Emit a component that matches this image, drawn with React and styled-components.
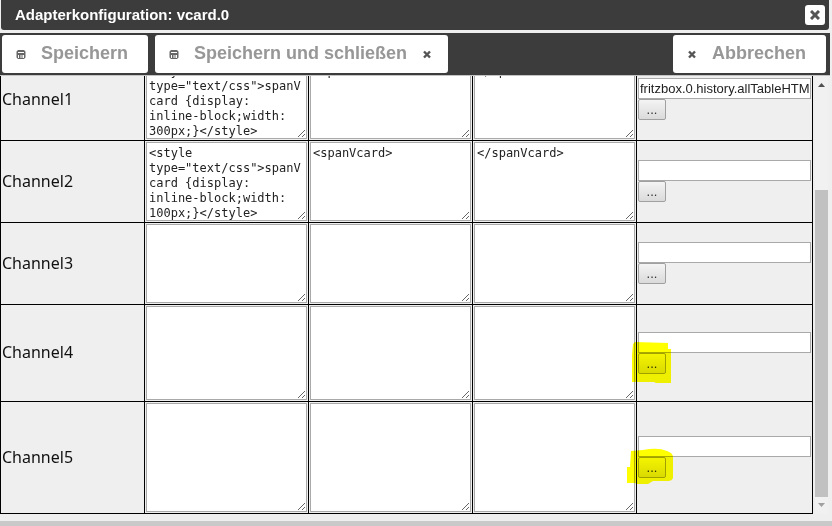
import React from "react";
import styled, { createGlobalStyle } from "styled-components";

const style = (width) =>
  `<style type="text/css">spanVcard {display: inline-block;width: ${width}px;}</style>`;

const channels = [
  {
    name: "Channel1",
    height: 79,
    fields: [style(300), "<spanVcard>", "</spanVcard>"],
    source: "fritzbox.0.history.allTableHTML",
  },
  {
    name: "Channel2",
    height: 79,
    fields: [style(100), "<spanVcard>", "</spanVcard>"],
    source: "",
  },
  { name: "Channel3", height: 79, fields: ["", "", ""], source: "" },
  {
    name: "Channel4",
    height: 94,
    fields: ["", "", ""],
    source: "",
    marker: "M5 2 L7 0 L40 1 L40 7 L43 7 L43 41 L28 41 L26 40 L4 40 L4 13 Z",
  },
  {
    name: "Channel5",
    height: 109,
    fields: ["", "", ""],
    source: "",
    marker:
      "M3 5 L15 4 Q30 1 39 5 Q45 7 45 11 L45 32 Q44 35 40 35 L25 35 L20 38 L9 38 L7 37 L-1 37 L-1 21 L2 21 Z",
  },
];

const DiskIcon = () => (
  <Icon viewBox="0 0 10 10" aria-hidden="true">
    <path
      fill="#666"
      fillRule="evenodd"
      d="M2 1h6l1.5 1.5v6L8 10H2L.5 8.500v-6zM2 3v1h6V3zM2 6v3h1V6zM4.500 6v3H5.500V6zM6.500 6v3H8V6z"
    />
  </Icon>
);

const CrossIcon = () => (
  <Icon viewBox="0 0 10 10" aria-hidden="true">
    <path d="M2 2.5L8 8.5M8 2.5L2 8.5" stroke="#555" strokeWidth="2.4" />
  </Icon>
);

const ChannelRow = ({ channel }) => {
  const { name, height, fields, source, marker } = channel;
  return (
    <tr>
      <NameCell scope="row">{name}</NameCell>
      {fields.map((text, i) => (
        <Cell key={i}>
          <Field
            $height={height}
            aria-label={`${name} ${i + 1}`}
            defaultValue={text}
            spellCheck={false}
          />
        </Cell>
      ))}
      <SourceCell>
        <SourceInput
          type="text"
          aria-label={`${name} ID`}
          defaultValue={source}
        />
        <PickerBox>
          <PickerButton type="button">...</PickerButton>
          {marker && (
            <Marker viewBox="-2 0 48 42" aria-hidden="true">
              <path d={marker} fill="#ffff00" />
            </Marker>
          )}
        </PickerBox>
      </SourceCell>
    </tr>
  );
};

const App = () => {
  return (
    <>
      <GlobalStyle />
      <Dialog>
        <TitleBar>
          <Title>Adapterkonfiguration: vcard.0</Title>
          <CloseButton type="button" aria-label="Schließen">
            <svg width="10" height="10" viewBox="0 0 10 10">
              <path d="M1 1L9 9M9 1L1 9" stroke="#555" strokeWidth="3" />
            </svg>
          </CloseButton>
        </TitleBar>
        <Toolbar>
          <ToolButton type="button">
            <DiskIcon />
            Speichern
          </ToolButton>
          <ToolButton type="button" $compact>
            <DiskIcon />
            Speichern und schließen
            <CrossIcon />
          </ToolButton>
          <Spacer />
          <ToolButton type="button">
            <CrossIcon />
            Abbrechen
          </ToolButton>
        </Toolbar>
        <Body>
          <Pane>
            <Table>
              <colgroup>
                <col />
                <Col $width={164} />
                <Col $width={164} />
                <Col $width={164} />
                <Col $width={176} />
              </colgroup>
              <tbody>
                {channels.map((channel) => (
                  <ChannelRow key={channel.name} channel={channel} />
                ))}
              </tbody>
            </Table>
          </Pane>
          <Scrollbar aria-hidden="true">
            <Arrow viewBox="0 0 13 17">
              <path d="M3 11h7L6.5 7z" fill="#505050" />
            </Arrow>
            <Track>
              <Thumb />
            </Track>
            <Arrow viewBox="0 0 13 17">
              <path d="M3 6h7L6.5 10z" fill="#a0a0a0" />
            </Arrow>
          </Scrollbar>
        </Body>
        <Footer />
      </Dialog>
    </>
  );
};

export default App;

const GlobalStyle = createGlobalStyle`
  * {
    box-sizing: border-box;
  }
  body {
    margin: 0;
    background: #efefef;
    font-family: "Liberation Sans", Arial, sans-serif;
  }
`;

const Dialog = styled.div`
  display: flex;
  flex-direction: column;
  height: 100vh;
  overflow: hidden;
`;

const TitleBar = styled.header`
  display: flex;
  align-items: center;
  justify-content: space-between;
  height: 30px;
  flex: none;
  margin: 0 3px 3px 1px;
  padding: 0 4px 0 14px;
  background: #3c3c3c;
  border-radius: 0 0 3px 3px;
`;

const Title = styled.h1`
  margin: 0;
  font-size: 15px;
  line-height: 20px;
  color: #fff;
`;

const CloseButton = styled.button`
  display: flex;
  align-items: center;
  justify-content: center;
  width: 20px;
  height: 20px;
  padding: 0;
  border: none;
  border-radius: 3px;
  background: #fff;
`;

const Toolbar = styled.div`
  display: flex;
  flex: none;
  gap: 7px;
  margin-right: 2px;
  padding: 2px 4px 2px 2px;
  background: #3c3c3c;
  border-bottom: 1px solid #c4c4c4;
`;

const Spacer = styled.div`
  flex: 1;
`;

const ToolButton = styled.button`
  display: flex;
  align-items: center;
  gap: 15px;
  height: 38px;
  padding: 0 ${({ $compact }) => ($compact ? 16 : 20)}px 2px 14px;
  border: none;
  border-radius: 3px;
  background: #fff;
  color: #979797;
  font-family: inherit;
  font-size: 18px;
  font-weight: bold;
  white-space: nowrap;
`;

const Icon = styled.svg`
  flex: none;
  width: 10px;
  height: 10px;
  margin-top: 2px;
`;

const Body = styled.main`
  display: flex;
  flex: 1;
  min-height: 0;
  gap: 2px;
  padding: 0 4px 7px 0;
`;

/* the list is scrolled to its end */
const Pane = styled.div`
  display: flex;
  flex: 1;
  flex-direction: column;
  justify-content: flex-end;
  min-width: 0;
  overflow: hidden;
`;

const Table = styled.table`
  flex: none;
  width: 100%;
  table-layout: fixed;
  border-collapse: collapse;
`;

const Col = styled.col`
  width: ${({ $width }) => $width}px;
`;

const Cell = styled.td`
  padding: 1px;
  border: 1px solid #000;
  vertical-align: middle;
`;

const SourceCell = styled(Cell)`
  padding-bottom: 2px;
`;

const NameCell = styled.th`
  padding: 1px 1px 3px;
  border: 1px solid #000;
  color: #111;
  font-family: "Noto Sans", "Open Sans", sans-serif;
  font-size: 16px;
  font-weight: normal;
  text-align: left;
`;

const Field = styled.textarea`
  display: block;
  width: 100%;
  height: ${({ $height }) => $height}px;
  margin: 0;
  padding: 3px 2px 0;
  border: 1px solid #a9a9a9;
  outline: none;
  overflow: hidden;
  resize: both;
  background: #fff;
  color: #222;
  font-family: "DejaVu Sans Mono", monospace;
  font-size: 12px;
  line-height: 15px;
`;

const SourceInput = styled.input`
  display: block;
  width: 100%;
  height: 21px;
  padding: 0 1px;
  border: 1px solid #a9a9a9;
  outline: none;
  background: #fff;
  color: #222;
  font-family: inherit;
  font-size: 13px;
`;

const PickerBox = styled.div`
  position: relative;
  width: 28px;
`;

const PickerButton = styled.button`
  display: block;
  width: 100%;
  height: 21px;
  padding: 0;
  border: 1px solid #a0a0a0;
  border-radius: 2px;
  background: linear-gradient(#f4f4f4, #dadada);
  color: #333;
  font-family: inherit;
  font-size: 13px;
`;

const Marker = styled.svg`
  position: absolute;
  top: -11px;
  left: -12px;
  width: 48px;
  height: 42px;
  mix-blend-mode: multiply;
  pointer-events: none;
`;

const Scrollbar = styled.div`
  display: flex;
  flex: none;
  flex-direction: column;
  width: 13px;
  background: #f1f1f1;
`;

const Arrow = styled.svg`
  flex: none;
  width: 13px;
  height: 17px;
`;

const Track = styled.div`
  display: flex;
  flex: 1;
  flex-direction: column;
  justify-content: flex-end;
`;

const Thumb = styled.div`
  height: 76%;
  background: #c1c1c1;
`;

const Footer = styled.div`
  flex: none;
  height: 5px;
  background: #c9c9c9;
`;
